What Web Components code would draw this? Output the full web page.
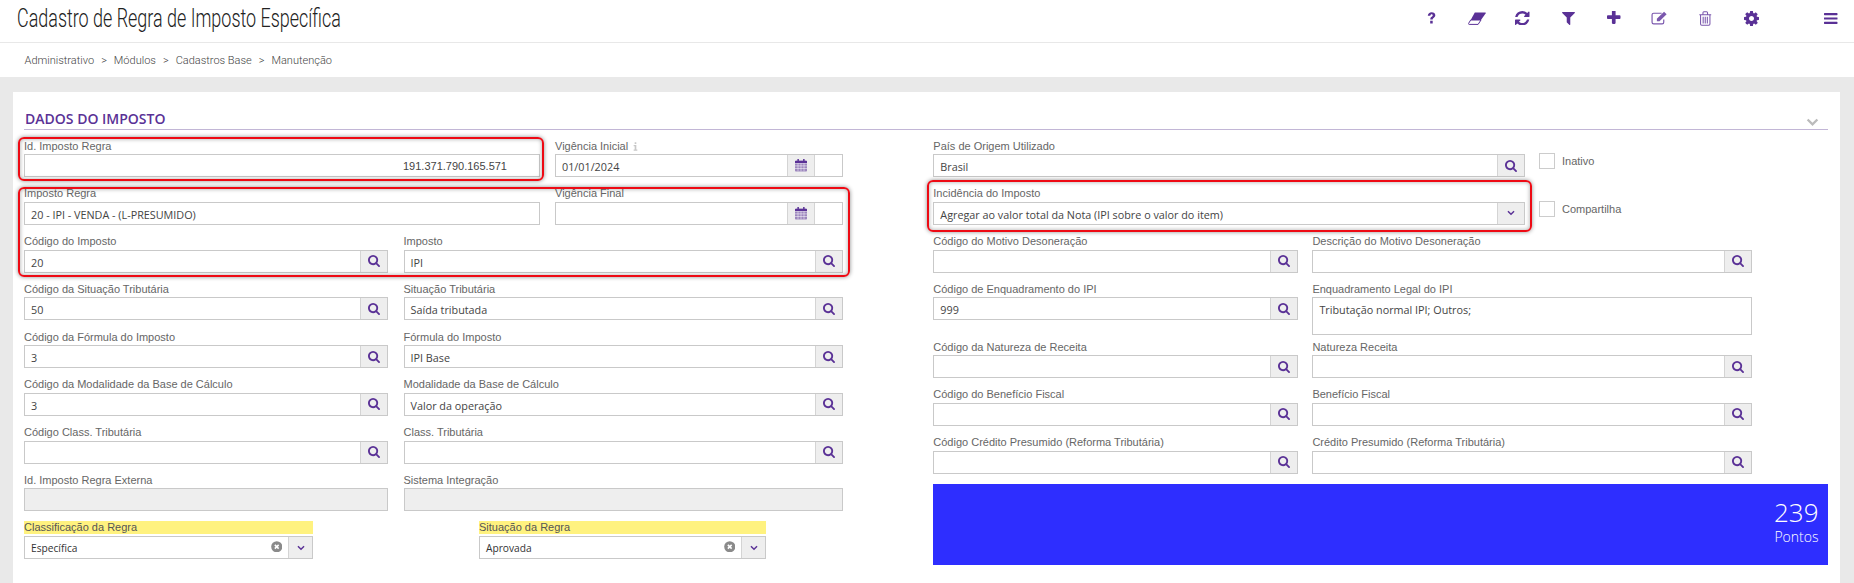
<!DOCTYPE html>
<html lang="pt-BR">
<head>
<meta charset="utf-8">
<title>Cadastro de Regra de Imposto Específica</title>
<style>
html,body{margin:0;height:583px;overflow:hidden;background:#e9e9e9;}
body{font-family:"Liberation Sans",Arial,sans-serif;font-size:11px;}
</style>
</head>
<body>
<x-topbar title="Cadastro de Regra de Imposto Específica"></x-topbar>
<x-crumbs path="Administrativo,Módulos,Cadastros Base,Manutenção"></x-crumbs>
<x-card heading="DADOS DO IMPOSTO">
  <x-col slot="left">
    <x-row cols="516px 288px" gap="15px">
      <x-field label="Id. Imposto Regra" value="191.371.790.165.571" align="right"></x-field>
      <x-field label="Vigência Inicial" value="01/01/2024" addon="cal" info></x-field>
    </x-row>
    <x-row cols="516px 288px" gap="15px">
      <x-field label="Imposto Regra" value="20 - IPI - VENDA - (L-PRESUMIDO)"></x-field>
      <x-field label="Vigência Final" addon="cal"></x-field>
    </x-row>
    <x-row cols="364px 439px">
      <x-field label="Código do Imposto" value="20" addon="search"></x-field>
      <x-field label="Imposto" value="IPI" addon="search"></x-field>
    </x-row>
    <x-row cols="364px 439px">
      <x-field label="Código da Situação Tributária" value="50" addon="search"></x-field>
      <x-field label="Situação Tributária" value="Saída tributada" addon="search"></x-field>
    </x-row>
    <x-row cols="364px 439px">
      <x-field label="Código da Fórmula do Imposto" value="3" addon="search"></x-field>
      <x-field label="Fórmula do Imposto" value="IPI Base" addon="search"></x-field>
    </x-row>
    <x-row cols="364px 439px">
      <x-field label="Código da Modalidade da Base de Cálculo" value="3" addon="search"></x-field>
      <x-field label="Modalidade da Base de Cálculo" value="Valor da operação" addon="search"></x-field>
    </x-row>
    <x-row cols="364px 439px">
      <x-field label="Código Class. Tributária" addon="search"></x-field>
      <x-field label="Class. Tributária" addon="search"></x-field>
    </x-row>
    <x-row cols="364px 439px">
      <x-field label="Id. Imposto Regra Externa" disabled></x-field>
      <x-field label="Sistema Integração" disabled></x-field>
    </x-row>
    <x-row cols="289px 287px" gap="166px">
      <x-field label="Classificação da Regra" value="Específica" addon="combo" mark></x-field>
      <x-field label="Situação da Regra" value="Aprovada" addon="combo" mark></x-field>
    </x-row>
  </x-col>
  <x-col slot="right">
    <x-row cols="591.7px auto" gap="14px">
      <x-field label="País de Origem Utilizado" value="Brasil" addon="search"></x-field>
      <x-check label="Inativo"></x-check>
    </x-row>
    <x-row cols="591.7px auto" gap="14px">
      <x-field label="Incidência do Imposto" value="Agregar ao valor total da Nota (IPI sobre o valor do item)" addon="select"></x-field>
      <x-check label="Compartilha"></x-check>
    </x-row>
    <x-row cols="364.7px 439.3px" gap="14.4px">
      <x-field label="Código do Motivo Desoneração" addon="search"></x-field>
      <x-field label="Descrição do Motivo Desoneração" addon="search"></x-field>
    </x-row>
    <x-row cols="364.7px 439.3px" gap="14.4px" tall>
      <x-field label="Código de Enquadramento do IPI" value="999" addon="search"></x-field>
      <x-field label="Enquadramento Legal do IPI" value="Tributação normal IPI; Outros;" area></x-field>
    </x-row>
    <x-row cols="364.7px 439.3px" gap="14.4px">
      <x-field label="Código da Natureza de Receita" addon="search"></x-field>
      <x-field label="Natureza Receita" addon="search"></x-field>
    </x-row>
    <x-row cols="364.7px 439.3px" gap="14.4px">
      <x-field label="Código do Benefício Fiscal" addon="search"></x-field>
      <x-field label="Benefício Fiscal" addon="search"></x-field>
    </x-row>
    <x-row cols="364.7px 439.3px" gap="14.4px">
      <x-field label="Código Crédito Presumido (Reforma Tributária)" addon="search"></x-field>
      <x-field label="Crédito Presumido (Reforma Tributária)" addon="search"></x-field>
    </x-row>
    <x-score points="239" caption="Pontos"></x-score>
  </x-col>
  <x-mark slot="over" style="left:5px;top:44.500px;width:525.500px;height:44.500px"></x-mark>
  <x-mark slot="over" style="left:5px;top:95px;width:831.500px;height:89.500px"></x-mark>
  <x-mark slot="over" style="left:914px;top:88px;width:604.500px;height:51.500px"></x-mark>
</x-card>

<script>
// icones de fonte em viewBox recortado, os de traco no tamanho real
const ROXO = "#5a3196";
const ICONES = {
  search: `<svg viewBox="64 128 1664 1664"><path d="M1216 832q0-185-131.500-316.500t-316.500-131.500-316.500 131.500-131.500 316.500 131.500 316.500 316.500 131.500 316.500-131.500 131.500-316.500zm512 832q0 52-38 90t-90 38q-54 0-90-38l-343-342q-179 124-399 124-143 0-273.500-55.500t-225-150-150-225-55.500-273.500 55.500-273.500 150-225 225-150 273.500-55.500 273.500 55.500 225 150 150 225 55.500 273.500q0 220-124 399l343 343q37 37 37 90z"/></svg>`,
  refresh: `<svg viewBox="128 128 1536 1536"><path d="M1639 1056q0 5-1 7-64 268-268 434.500t-478 166.500q-146 0-282.500-55t-243.500-157l-129 129q-19 19-45 19t-45-19-19-45v-448q0-26 19-45t45-19h448q26 0 45 19t19 45-19 45l-137 137q71 66 161 102t187 36q134 0 250-65t186-179q11-17 53-117 8-23 30-23h192q13 0 22.500 9.500t9.500 22.500zm25-800v448q0 26-19 45t-45 19h-448q-26 0-45-19t-19-45 19-45l138-138q-148-137-349-137-134 0-250 65t-186 179q-11 17-53 117-8 23-30 23h-199q-13 0-22.500-9.500t-9.500-22.500v-7q65-268 270-434.500t480-166.500q146 0 284 55.500t245 156.500l130-129q19-19 45-19t45 19 19 45z"/></svg>`,
  filter: `<svg viewBox="190 256 1412 1408"><path d="M1595 295q17 41-14 70l-493 493v742q0 42-39 59-13 5-25 5-27 0-45-19l-256-256q-19-19-19-45v-486l-493-493q-31-29-14-70 17-39 59-39h1280q42 0 59 39z"/></svg>`,
  plus: `<svg viewBox="192 192 1408 1408"><path d="M1600 736v192q0 40-28 68t-68 28h-416v416q0 40-28 68t-68 28h-192q-40 0-68-28t-28-68v-416h-416q-40 0-68-28t-28-68v-192q0-40 28-68t68-28h416v-416q0-40 28-68t68-28h192q40 0 68 28t28 68v416h416q40 0 68 28t28 68z"/></svg>`,
  bars: `<svg viewBox="128 256 1536 1280" preserveAspectRatio="none"><path d="M1664 1344v128q0 26-19 45t-45 19h-1408q-26 0-45-19t-19-45v-128q0-26 19-45t45-19h1408q26 0 45 19t19 45zm0-512v128q0 26-19 45t-45 19h-1408q-26 0-45-19t-19-45v-128q0-26 19-45t45-19h1408q26 0 45 19t19 45zm0-512v128q0 26-19 45t-45 19h-1408q-26 0-45-19t-19-45v-128q0-26 19-45t45-19h1408q26 0 45 19t19 45z"/></svg>`,
  cog: `<svg viewBox="128 128 1536 1536"><path d="M1152 896q0-106-75-181t-181-75-181 75-75 181 75 181 181 75 181-75 75-181zm512-109v222q0 12-8 23t-20 13l-185 28q-19 54-39 91 35 50 107 138 10 12 10 25t-9 23q-27 37-99 108t-94 71q-12 0-26-9l-138-108q-44 23-91 38-16 136-29 186-7 28-36 28h-222q-14 0-24.500-8.500t-11.500-21.500l-28-184q-49-16-90-37l-141 107q-10 9-25 9-14 0-25-11-126-114-165-168-7-10-7-23 0-12 8-23 15-21 51-66.500t54-70.500q-27-50-41-99l-183-27q-13-2-21-12.500t-8-23.500v-222q0-12 8-23t19-13l186-28q14-46 39-92-40-57-107-138-10-12-10-24 0-10 9-23 26-36 98.500-107.500t94.500-71.500q13 0 26 10l138 107q44-23 91-38 16-136 29-186 7-28 36-28h222q14 0 24.500 8.500t11.500 21.500l28 184q49 16 90 37l142-107q9-9 24-9 13 0 25 10 129 119 165 170 7 8 7 22 0 12-8 23-15 21-51 66.500t-54 70.500q26 50 41 98l183 28q13 2 21 12.500t8 23.500z"/></svg>`,
  help: `<svg viewBox="0 0 8 11"><path d="M.6 3.400C.8 1.500 2.200.3 4.100.3c2 0 3.400 1.100 3.400 2.700 0 1.200-.6 1.800-1.500 2.400-.7.500-.9.700-.9 1.500H2.900c0-1.300.3-1.900 1.200-2.500.7-.5 1-.8 1-1.400 0-.6-.4-1-1-1-.7 0-1.100.5-1.200 1.400zM2.800 8h2.300v2.500H2.800z"/></svg>`,
  eraser: `<svg viewBox="0 0 18 13"><path d="M6.800.5h10.400c.5 0 .7.400.5.700L13 8H2.700z"/><path d="M2.700 8H13l-2.900 4.400H1.200c-.6 0-.9-.5-.6-1z" fill="#fff" stroke="currentColor" stroke-width="1"/></svg>`,
  edit: `<svg viewBox="0 0 16 13"><path d="M12 8v2.500A1.500 1.500 0 0 1 10.500 12h-8A1.500 1.500 0 0 1 1 10.500v-7A1.500 1.500 0 0 1 2.500 2H10" fill="none" stroke="currentColor" stroke-width="1.100"/><path d="M5.500 7.200 12.300.6l2.400 2.300L8 9.600H5.500z"/></svg>`,
  trash: `<svg viewBox="0 0 12 14"><path d="M1.500 3.500v8.800c0 .7.500 1.200 1.100 1.200h6.800c.6 0 1.100-.5 1.100-1.200V3.500M.3 3.300h11.400M3.800 3V1.500c0-.6.400-1 .9-1h2.600c.5 0 .9.400.9 1V3" fill="none" stroke="currentColor" stroke-width="1"/><path d="M3.500 5.200h1v6.500h-1zM5.500 5.200h1v6.500h-1zM7.500 5.200h1v6.500h-1z"/></svg>`,
  cal: `<svg viewBox="0 0 12 12.500"><path d="M.8 1.700h10.400a.8.800 0 0 1 .8.800v9.200a.8.800 0 0 1-.8.800H.8a.8.800 0 0 1-.8-.8V2.500a.8.800 0 0 1 .8-.8z" opacity=".55"/><path d="M0 4.300h12M0 6.900h12M0 9.500h12M3 4.300v8M6 4.300v8M9 4.300v8" stroke="#fff" stroke-width=".5" fill="none"/><path d="M0 2.500a.8.800 0 0 1 .8-.8h10.400a.8.800 0 0 1 .8.800V4H0zM2.400 0h1.500v2.800H2.400zM8.100 0h1.500v2.800H8.100z"/></svg>`,
  down: `<svg viewBox="0 0 10 7"><path d="M1.200 1.200 5 5l3.800-3.800" fill="none" stroke="currentColor" stroke-width="1.800"/></svg>`,
  clear: `<svg viewBox="0 0 12 12"><circle cx="6" cy="6" r="5.800" fill="#8a8a8a"/><path d="M4 4l4 4M8 4l-4 4" stroke="#fff" stroke-width="1.600"/></svg>`,
  info: `<svg viewBox="0 0 6 10"><path d="M2 0h2v2H2zM.8 3.200H4v5.400h1.200V10H.8V8.600H2V4.600H.8z"/></svg>`
};

customElements.define('x-icon', class extends HTMLElement {
  constructor(){ super(); this.attachShadow({mode:'open'}); }
  connectedCallback(){
    const w = this.getAttribute("w") || 14, h = this.getAttribute("h") || w;
    this.shadowRoot.innerHTML = `
<style>
:host{display:inline-flex;color:var(--icon-color,${ROXO});}
svg{width:${w}px;height:${h}px;fill:currentColor;display:block;}
</style>${ICONES[this.getAttribute("name")]}`;
  }
});

customElements.define('x-topbar', class extends HTMLElement {
  constructor(){ super(); this.attachShadow({mode:'open'});
    const botoes = [["help",9,12],["eraser",18,13],["refresh",14.5,14.5],["filter",13,13],["plus",13.5,13.5],["edit",17,14],["trash",12.5,15],["cog",15,15]];
    this.shadowRoot.innerHTML = `
<style>
:host{display:flex;align-items:center;height:43px;box-sizing:border-box;background:#fff;border-bottom:1px solid #e8e8e8;padding:0 0 6px 17px;}
h1{margin:0;font:300 25px/1 Roboto,sans-serif;color:#222;white-space:nowrap;transform:scaleX(.718);transform-origin:left center;flex:1;}
.bt{width:45.7px;display:flex;justify-content:center;}
.menu{width:46px;margin-left:34px;display:flex;justify-content:center;}
.leve{--icon-color:#7a57ad;}
</style>
<h1>${this.getAttribute("title")}</h1>
${botoes.map(b => `<div class="bt ${b[0]=="edit"||b[0]=="trash"?"leve":""}"><x-icon name="${b[0]}" w="${b[1]}" h="${b[2]}"></x-icon></div>`).join("")}
<div class="menu"><x-icon name="bars" w="13.5" h="11"></x-icon></div>`;
  }
});

customElements.define('x-crumbs', class extends HTMLElement {
  constructor(){ super(); this.attachShadow({mode:'open'});
    const partes = this.getAttribute("path").split(",");
    this.shadowRoot.innerHTML = `
<style>
:host{display:flex;align-items:center;gap:7px;height:34px;box-sizing:border-box;background:#fff;padding-left:24.5px;font:300 11px Roboto,sans-serif;color:#444;}
</style>
${partes.join(" <span>&gt;</span> ")}`;
  }
});

customElements.define('x-card', class extends HTMLElement {
  constructor(){ super(); this.attachShadow({mode:'open'});
    this.shadowRoot.innerHTML = `
<style>
:host{display:block;position:relative;box-sizing:border-box;margin:15px 14px 0 13px;height:491px;background:#fff;padding:0 12px 0 11px;}
.head{display:flex;align-items:flex-end;justify-content:space-between;height:38px;box-sizing:border-box;border-bottom:1px solid #c2b6d6;}
h2{margin:0 0 2px 1px;font:600 14px/16px "Open Sans",sans-serif;color:${ROXO};}
.chev{--icon-color:#bbb;margin:0 8px 2px 0;}
.cols{display:flex;justify-content:space-between;padding-top:8px;}
</style>
<div class="head"><h2>${this.getAttribute("heading")}</h2><x-icon class="chev" name="down" w="15" h="9"></x-icon></div>
<div class="cols"><slot name="left"></slot><slot name="right"></slot></div>
<slot name="over"></slot>`;
  }
});

customElements.define('x-col', class extends HTMLElement {
  constructor(){ super(); this.attachShadow({mode:'open'});
    this.shadowRoot.innerHTML = `
<style>
:host{display:flex;flex-direction:column;gap:8.75px;}
:host([slot=left]){width:819px;}
:host([slot=right]){width:894.7px;}
</style><slot></slot>`;
  }
});

customElements.define('x-row', class extends HTMLElement {
  constructor(){ super(); this.attachShadow({mode:'open'});
    const gap = this.getAttribute("gap") || "15.5px";
    this.shadowRoot.innerHTML = `
<style>
:host{display:grid;grid-template-columns:${this.getAttribute("cols")};column-gap:${gap};height:39px;}
:host([tall]){height:49px;}
</style><slot></slot>`;
  }
});

customElements.define('x-field', class extends HTMLElement {
  constructor(){ super(); this.attachShadow({mode:'open'});
    const addon = this.getAttribute("addon");
    const value = this.getAttribute("value") || "";
    let extra = "";
    if (addon == "search") extra = `<div class="bt"><x-icon name="search" w="12" h="12"></x-icon></div>`;
    if (addon == "select") extra = `<div class="bt"><x-icon name="down" w="8" h="6"></x-icon></div>`;
    if (addon == "cal") extra = `<div class="bt"><x-icon name="cal" w="12" h="12.5"></x-icon></div><div class="vazio"></div>`;
    if (addon == "combo") extra = `<x-icon class="limpa" name="clear" w="11.5" h="11.5"></x-icon><div class="bt seta"><x-icon name="down" w="8" h="6"></x-icon></div>`;
    this.shadowRoot.innerHTML = `
<style>
:host{display:block;min-width:0;color:#666;font:11px "Liberation Sans",Arial,sans-serif;}
.rot{height:16px;line-height:15px;display:flex;align-items:center;gap:5px;white-space:nowrap;}
:host([mark]) .rot{height:13px;margin:1px 0 2px;background:#fff27f;color:#555;}
.caixa{display:flex;align-items:stretch;height:23px;box-sizing:border-box;border:1px solid #c9c9c9;background:#fff;color:#444;}
:host([disabled]) .caixa{background:#eee;}
:host([area]) .caixa{height:38px;align-items:flex-start;}
:host([mark]) .caixa{color:#333;}
.val{flex:1;min-width:0;padding:1px 6px 0;line-height:21px;white-space:nowrap;overflow:hidden;font-family:"Open Sans",sans-serif;font-size:10.8px;}
:host([align=right]) .val{text-align:right;padding-right:32px;font-family:"Liberation Sans",Arial,sans-serif;font-size:11px;}
:host([mark]) .val{font-size:10.2px;}
.bt{width:26px;flex:none;display:flex;align-items:center;justify-content:center;background:#eee;border-left:1px solid #d4d4d4;}
.seta{width:23px;}
.vazio{width:27px;flex:none;border-left:1px solid #d4d4d4;}
.limpa{align-self:center;margin-right:6px;margin-top:-2px;}
.inf{--icon-color:#c8c8c8;}
</style>
<div class="rot">${this.getAttribute("label")}${this.hasAttribute("info") ? `<x-icon class="inf" name="info" w="5" h="9"></x-icon>` : ""}</div>
<div class="caixa"><div class="val">${value}</div>${extra}</div>`;
  }
});

customElements.define('x-check', class extends HTMLElement {
  constructor(){ super(); this.attachShadow({mode:'open'});
    this.shadowRoot.innerHTML = `
<style>
:host{display:flex;align-items:center;gap:7px;height:16px;margin-top:15px;color:#666;font:11px "Liberation Sans",Arial,sans-serif;}
i{display:block;width:16px;height:16px;box-sizing:border-box;border:1px solid #ccc;background:#fff;}
</style><i></i><span>${this.getAttribute("label")}</span>`;
  }
});

customElements.define('x-score', class extends HTMLElement {
  constructor(){ super(); this.attachShadow({mode:'open'});
    this.shadowRoot.innerHTML = `
<style>
:host{display:flex;flex-direction:column;align-items:flex-end;justify-content:center;height:81px;box-sizing:border-box;margin-top:1.25px;padding:0 9.5px 6px 0;background:#2e2eff;color:#fff;font-family:"Open Sans",sans-serif;font-weight:300;}
b{font-weight:300;font-size:26px;line-height:32px;}
span{font-size:14px;line-height:18px;}
</style><b>${this.getAttribute("points")}</b><span>${this.getAttribute("caption")}</span>`;
  }
});

// destaques vermelhos ficam por cima do formulario
customElements.define('x-mark', class extends HTMLElement {
  constructor(){ super(); this.attachShadow({mode:'open'});
    this.shadowRoot.innerHTML = `
<style>
:host{display:block;position:absolute;box-sizing:border-box;border:2px solid #ee0a14;border-radius:6px;box-shadow:0 0 4px rgba(0,0,0,.45),inset 0 0 4px rgba(0,0,0,.35);pointer-events:none;}
</style>`;
  }
});
</script>
</body>
</html>
